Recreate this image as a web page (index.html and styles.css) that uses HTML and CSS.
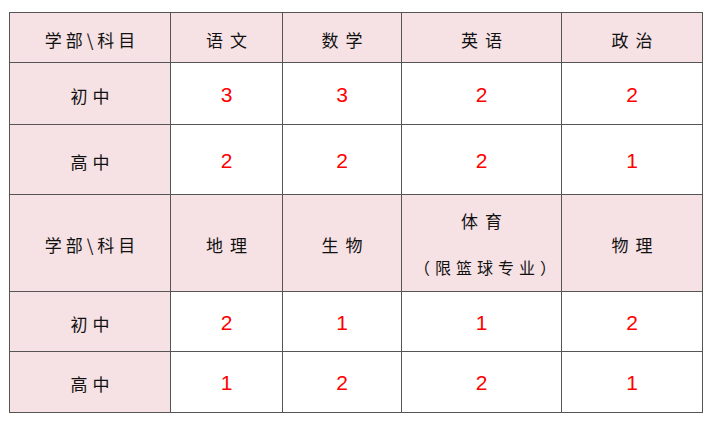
FILE: index.html
```html
<!DOCTYPE html>
<html lang="zh">
<head>
<meta charset="utf-8">
<link rel="stylesheet" href="styles.css">
</head>
<body>
<div class="table">
  <div class="cell head first">学部\科目</div>
  <div class="cell head">语文</div>
  <div class="cell head">数学</div>
  <div class="cell head">英语</div>
  <div class="cell head">政治</div>

  <div class="cell head label">初中</div>
  <div class="cell num">3</div>
  <div class="cell num">3</div>
  <div class="cell num">2</div>
  <div class="cell num">2</div>

  <div class="cell head label">高中</div>
  <div class="cell num">2</div>
  <div class="cell num">2</div>
  <div class="cell num">2</div>
  <div class="cell num">1</div>

  <div class="cell head first">学部\科目</div>
  <div class="cell head">地理</div>
  <div class="cell head">生物</div>
  <div class="cell head stack"><span>体育</span><span class="sub">（限篮球专业）</span></div>
  <div class="cell head">物理</div>

  <div class="cell head label">初中</div>
  <div class="cell num">2</div>
  <div class="cell num">1</div>
  <div class="cell num">1</div>
  <div class="cell num">2</div>

  <div class="cell head label">高中</div>
  <div class="cell num">1</div>
  <div class="cell num">2</div>
  <div class="cell num">2</div>
  <div class="cell num">1</div>
</div>
</body>
</html>
```

FILE: styles.css
```css
* { box-sizing: border-box; }
html, body { margin: 0; padding: 0; background: #ffffff; }
body {
  padding: 12px 0 0 9px;
  font-family: "Noto Sans CJK SC", "Noto Sans", sans-serif;
}
.table {
  display: grid;
  grid-template-columns: 161px 112px 119px 160px 141px;
  grid-template-rows: 50px 62px 70px 97px 60px 61px;
  width: 694px;
  border-top: 1px solid #555;
  border-left: 1px solid #555;
}
.cell {
  border-right: 1px solid #555;
  border-bottom: 1px solid #555;
  display: flex;
  align-items: center;
  justify-content: center;
  background: #ffffff;
}
.head {
  background: #f6e1e4;
  color: #111;
  font-size: 17px;
  letter-spacing: 7px;
  padding-left: 7px;
  padding-top: 3px;
}
.first { letter-spacing: 4px; padding-left: 4px; }
.label { letter-spacing: 5px; padding-left: 5px; }
.stack {
  flex-direction: column;
  gap: 22px;
  padding-top: 0;
}
.stack .sub { letter-spacing: 5px; font-size: 16px; padding-left: 5px; }
.num {
  color: #ff0000;
  font-family: "Liberation Sans", sans-serif;
  font-size: 21px;
  padding-top: 2px;
}
```
